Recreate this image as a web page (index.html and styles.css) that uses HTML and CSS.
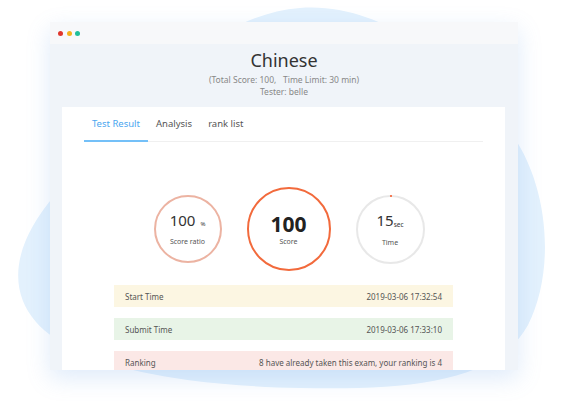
FILE: index.html
```html
<!DOCTYPE html>
<html lang="en">
<head>
  <meta charset="UTF-8">
  <title>Test Result</title>
  <link rel="stylesheet" href="styles.css">
</head>
<body>
  <div class="stage">
    <svg class="blob" width="572" height="401" viewBox="0 0 572 401">
      <path d="M300 8 C380 2 450 60 505 125 C550 180 556 270 528 325 C495 385 400 390 300 388 C200 386 80 372 36 322 C8 290 12 245 55 195 C110 130 200 15 300 8 Z" fill="#e3f1fd"/>
    </svg>

    <div class="window">
      <div class="titlebar">
        <span class="dot red"></span>
        <span class="dot yellow"></span>
        <span class="dot green"></span>
      </div>

      <div class="head">
        <h1>Chinese</h1>
        <p>(Total Score: 100,&nbsp;&nbsp;&nbsp;Time Limit: 30 min)</p>
        <p>Tester: belle</p>
      </div>

      <div class="card">
        <div class="tabs">
          <span class="tab active">Test Result</span>
          <span class="tab">Analysis</span>
          <span class="tab">rank list</span>
        </div>

        <div class="circles">
          <div class="circle ratio">
            <div class="num">100<small>%</small></div>
            <div class="label">Score ratio</div>
          </div>
          <div class="circle score">
            <div class="num">100</div>
            <div class="label">Score</div>
          </div>
          <div class="circle time">
            <div class="num">15<sub>sec</sub></div>
            <div class="label">Time</div>
          </div>
        </div>

        <ul class="rows">
          <li class="yellow"><span>Start Time</span><span>2019-03-06 17:32:54</span></li>
          <li class="green"><span>Submit Time</span><span>2019-03-06 17:33:10</span></li>
          <li class="pink"><span>Ranking</span><span>8 have already taken this exam, your ranking is 4</span></li>
        </ul>
      </div>
    </div>
  </div>
</body>
</html>
```

FILE: styles.css
```css
body {
  margin: 0;
  padding: 0;
  background-color: #fff;
  font-family: "Noto Sans", "Open Sans", sans-serif;
  color: #333;
}

.stage {
  position: relative;
  width: 572px;
  height: 401px;
  overflow: hidden;
}

.blob {
  position: absolute;
  left: 0;
  top: 0;
}

.window {
  position: relative;
  margin: 22px 0 0 50px;
  width: 468px;
  height: 348px;
  background-color: #f0f4f9;
  box-shadow: 0 8px 22px rgba(110, 165, 230, 0.22);
  overflow: hidden;
}

.titlebar {
  height: 22px;
  background-color: #f7f8fa;
  display: flex;
  align-items: center;
  gap: 3.5px;
  padding-left: 8px;
}

.dot {
  width: 5px;
  height: 5px;
  border-radius: 50%;
}

.dot.red { background-color: #e0362c; }
.dot.yellow { background-color: #f6b21b; }
.dot.green { background-color: #1fbf9a; }

.head {
  text-align: center;
  padding-top: 4px;
  height: 59px;
}

.head h1 {
  margin: 0 0 2px;
  font-size: 18px;
  font-weight: normal;
  line-height: 24px;
  color: #333;
}

.head p {
  margin: 0;
  font-size: 8.5px;
  line-height: 12px;
  color: #888;
}

.card {
  margin: 0 13px 0 12px;
  height: 300px;
  background-color: #fff;
  padding: 0 22px;
}

.tabs {
  display: flex;
  height: 34px;
  border-bottom: 1px solid #f0f0f0;
}

.tab {
  padding: 0 8px;
  font-size: 9.5px;
  line-height: 34px;
  color: #555;
}

.tab.active {
  color: #4aa6ef;
  border-bottom: 2px solid #74c0f8;
  margin-bottom: -1px;
}

.circles {
  display: flex;
  justify-content: center;
  align-items: center;
  gap: 25px;
  padding-left: 11px;
  height: 112px;
  padding-top: 31px;
}

.circle {
  border-radius: 50%;
  display: flex;
  flex-direction: column;
  align-items: center;
  justify-content: center;
  position: relative;
  box-sizing: border-box;
}

.circle.ratio {
  width: 68px;
  height: 68px;
  border: 2px solid #ecb3a2;
}

.circle.score {
  width: 84px;
  height: 84px;
  border: 2.5px solid #f26a3c;
}

.circle.time {
  width: 69px;
  height: 69px;
  border: 2px solid #e8e8e8;
}

.circle.time::before {
  content: "";
  position: absolute;
  top: -2px;
  left: 50%;
  width: 2px;
  height: 2px;
  background-color: #f47a55;
}

.num {
  font-size: 15px;
  line-height: 18px;
  color: #333;
}

.num small {
  font-size: 6px;
  margin-left: 5px;
}

.num sub {
  font-size: 6.5px;
  vertical-align: -1px;
}

.score .num {
  font-size: 21px;
  font-weight: bold;
  line-height: 24px;
  color: #222;
}

.label {
  font-size: 7px;
  line-height: 10px;
  color: #555;
  margin-top: 4px;
}

.score .label {
  margin-top: 1px;
}

.rows {
  list-style: none;
  margin: 0 30px;
  padding: 0;
}

.rows li {
  display: flex;
  justify-content: space-between;
  height: 22px;
  align-items: center;
  padding: 0 11px;
  margin-bottom: 11px;
  font-size: 8px;
  color: #555;
}

.rows li.yellow { background-color: #fcf6e2; }
.rows li.green { background-color: #e8f4e7; }
.rows li.pink { background-color: #fbe8e6; }
```
